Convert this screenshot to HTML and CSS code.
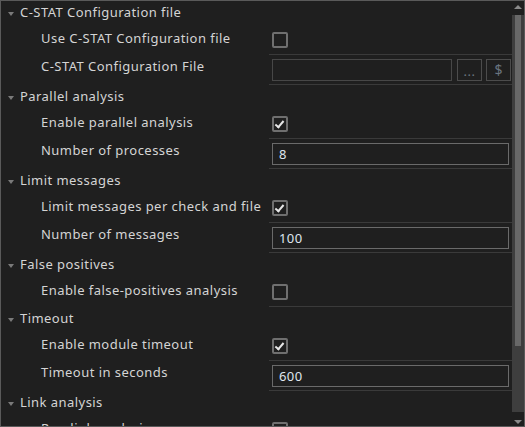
FILE: index.html
```html
<!DOCTYPE html>
<html>
<head>
<meta charset="utf-8">
<link rel="stylesheet" href="styles.css">
</head>
<body>
<div class="panel">
  <div class="content">
    <div class="cat"><span class="arrow"></span><span class="cat-title">C-STAT Configuration file</span></div>
    <div class="prop">
      <div class="label">Use C-STAT Configuration file</div>
      <div class="value check-row"><span class="cb"></span></div>
    </div>
    <div class="prop tall">
      <div class="label">C-STAT Configuration File</div>
      <div class="value"><span class="input disabled short"></span><span class="btn dots">...</span><span class="btn dollar">$</span></div>
    </div>

    <div class="cat"><span class="arrow"></span><span class="cat-title">Parallel analysis</span></div>
    <div class="prop">
      <div class="label">Enable parallel analysis</div>
      <div class="value check-row"><span class="cb checked"></span></div>
    </div>
    <div class="prop tall">
      <div class="label">Number of processes</div>
      <div class="value"><span class="input">8</span></div>
    </div>

    <div class="cat"><span class="arrow"></span><span class="cat-title">Limit messages</span></div>
    <div class="prop">
      <div class="label">Limit messages per check and file</div>
      <div class="value check-row"><span class="cb checked"></span></div>
    </div>
    <div class="prop tall">
      <div class="label">Number of messages</div>
      <div class="value"><span class="input">100</span></div>
    </div>

    <div class="cat"><span class="arrow"></span><span class="cat-title">False positives</span></div>
    <div class="prop">
      <div class="label">Enable false-positives analysis</div>
      <div class="value check-row"><span class="cb"></span></div>
    </div>

    <div class="cat"><span class="arrow"></span><span class="cat-title">Timeout</span></div>
    <div class="prop">
      <div class="label">Enable module timeout</div>
      <div class="value check-row"><span class="cb checked"></span></div>
    </div>
    <div class="prop tall">
      <div class="label">Timeout in seconds</div>
      <div class="value"><span class="input">600</span></div>
    </div>

    <div class="cat"><span class="arrow"></span><span class="cat-title">Link analysis</span></div>
    <div class="prop">
      <div class="label">Run link analysis</div>
      <div class="value check-row"><span class="cb"></span></div>
    </div>
  </div>
  <div class="scrollbar">
    <div class="sb-arrow up"></div>
    <div class="sb-track"><div class="sb-thumb"></div></div>
    <div class="sb-arrow down"></div>
  </div>
</div>
</body>
</html>
```
FILE: styles.css
```css
html, body {
  margin: 0;
  padding: 0;
  background: #1f1f1f;
}
.panel {
  width: 525px;
  height: 427px;
  box-sizing: border-box;
  border: 1px solid #5a5a5a;
  background: #1f1f1f;
  display: flex;
  overflow: hidden;
  font-family: "Noto Sans", "Open Sans", sans-serif;
  font-size: 13px;
  letter-spacing: 0.45px;
  color: #d4d4d4;
}
.content {
  flex: 1;
  min-width: 0;
  display: flex;
  flex-direction: column;
}
.cat {
  height: 26px;
  flex: none;
  display: flex;
  align-items: center;
  padding-left: 7px;
  padding-bottom: 5px;
  box-sizing: border-box;
}
.arrow {
  width: 0;
  height: 0;
  border-left: 3.5px solid transparent;
  border-right: 3.5px solid transparent;
  border-top: 4px solid #7a7a7a;
  margin-top: 4px;
  margin-right: 6px;
}
.prop {
  display: flex;
  height: 28px;
  flex: none;
}
.prop.tall {
  height: 30px;
}
.label {
  width: 268px;
  flex: none;
  box-sizing: border-box;
  padding-left: 40px;
  padding-bottom: 7px;
  display: flex;
  align-items: center;
  white-space: nowrap;
}
.prop.tall .label {
  padding-bottom: 9px;
}
.value {
  flex: 1;
  border-bottom: 1px solid #3a3a3a;
  display: flex;
  align-items: center;
  padding: 0 3px;
  gap: 3px;
}
.check-row {
  padding-bottom: 1px;
}
.cb {
  width: 16px;
  height: 16px;
  box-sizing: border-box;
  border: 2px solid #6f6f6f;
  border-radius: 2px;
  position: relative;
}
.cb.checked::after {
  content: "";
  position: absolute;
  left: 3px;
  top: 1px;
  width: 3px;
  height: 7px;
  border-right: 2px solid #e6e6e6;
  border-bottom: 2px solid #e6e6e6;
  transform: rotate(40deg);
  transform-origin: center;
}
.input {
  flex: 1;
  height: 22px;
  box-sizing: border-box;
  border: 1px solid #6a6a6a;
  padding-left: 6px;
  display: flex;
  align-items: center;
  color: #dfe6ee;
  font-size: 13px;
  letter-spacing: 0.4px;
}
.input.disabled {
  border-color: #474747;
}
.input.short {
  flex: none;
  width: 180px;
  margin-right: 1px;
}
.btn {
  width: 25px;
  height: 22px;
  box-sizing: border-box;
  border: 1px solid #4c4c4c;
  display: flex;
  align-items: center;
  justify-content: center;
  color: #6a7580;
  font-size: 13px;
  letter-spacing: 0;
  margin-left: 1px;
}
.btn.dots {
  padding-top: 3px;
  letter-spacing: 0.5px;
}
.btn.dollar {
  font-size: 14px;
}
.scrollbar {
  width: 12px;
  flex: none;
  display: flex;
  flex-direction: column;
  align-items: center;
  background: #1f1f1f;
}
.sb-arrow {
  height: 14px;
  flex: none;
  display: flex;
  align-items: center;
  justify-content: center;
}
.sb-arrow::before {
  content: "";
  width: 0;
  height: 0;
  border-left: 4px solid transparent;
  border-right: 4px solid transparent;
}
.sb-arrow.up::before {
  border-bottom: 4px solid #8a8a8a;
  margin-top: -2px;
}
.sb-arrow.down::before {
  border-top: 4px solid #8a8a8a;
  margin-top: 6px;
}
.sb-track {
  flex: 1;
  width: 12px;
  background: #3e3e3e;
  display: flex;
  justify-content: center;
}
.sb-thumb {
  width: 6px;
  height: 331px;
  background: #686868;
}
```
